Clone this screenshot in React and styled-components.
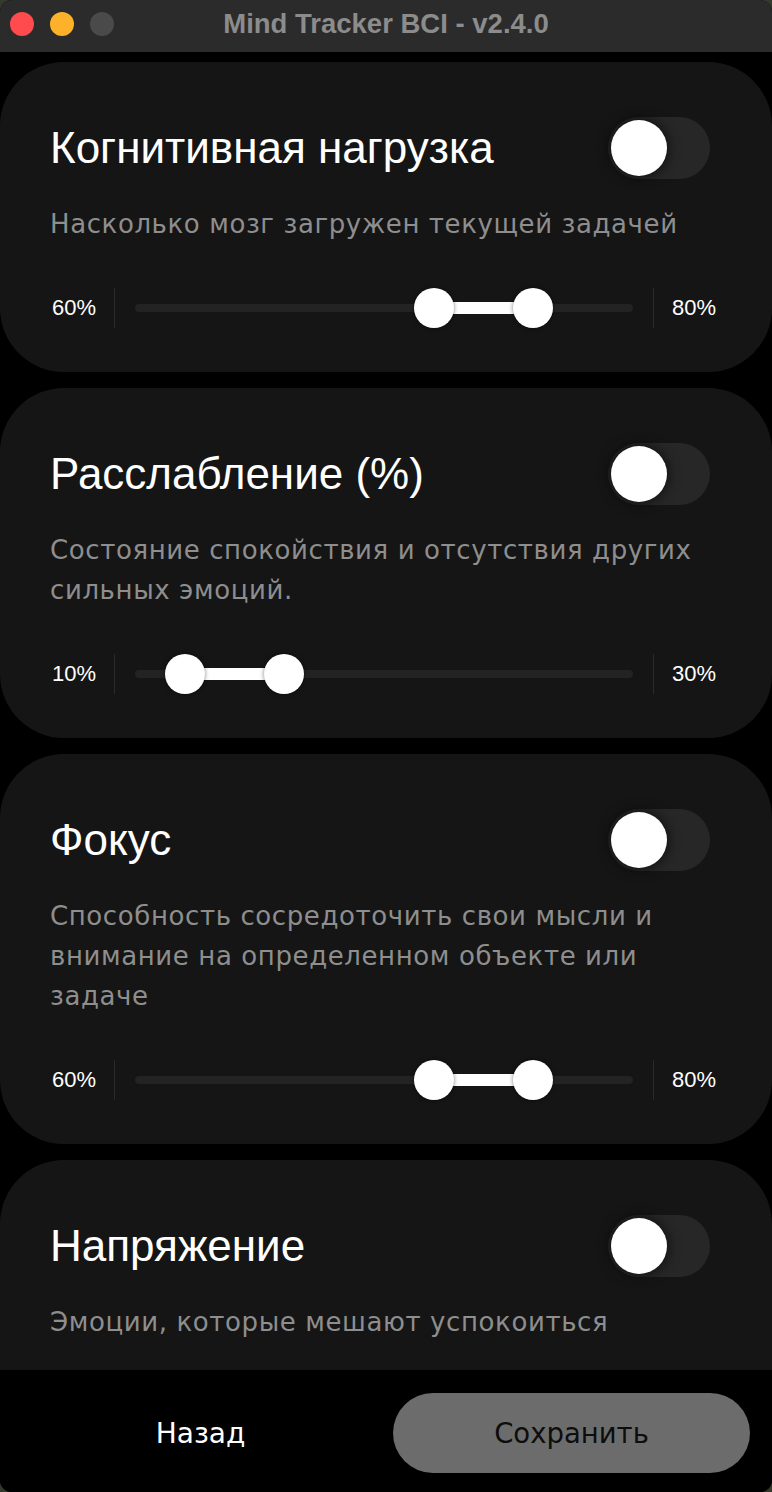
import React from "react";
import styled, { createGlobalStyle } from "styled-components";

const Global = createGlobalStyle`
  html, body {
    margin: 0;
    padding: 0;
    background: #34392c;
  }
  * { box-sizing: border-box; }
`;

const Window = styled.div`
  width: 772px;
  height: 1492px;
  display: flex;
  flex-direction: column;
  background: #000;
  border-radius: 12px;
  overflow: hidden;
  font-family: "DejaVu Sans", "Liberation Sans", sans-serif;
`;

const TitleBar = styled.header`
  position: relative;
  height: 52px;
  flex: none;
  display: flex;
  align-items: center;
  justify-content: center;
  padding-bottom: 5px;
  background: #2b2b2b;
`;

const Lights = styled.div`
  position: absolute;
  left: 10px;
  top: 12px;
  display: flex;
  gap: 16px;
`;

const Light = styled.span`
  width: 24px;
  height: 24px;
  border-radius: 50%;
  background: ${(p) => p.$color};
`;

const WindowTitle = styled.h1`
  margin: 0;
  font-family: "Liberation Sans", Arial, sans-serif;
  font-weight: 700;
  font-size: 27.5px;
  color: #8c8c8c;
`;

const Scroller = styled.main`
  flex: 1;
  overflow: hidden;
  display: flex;
  flex-direction: column;
  gap: 16px;
  padding-top: 10px;
`;

const Card = styled.section`
  flex: none;
  background: #151515;
  border-radius: 64px;
  padding: 55px 54px 44px 50px;
  display: flex;
  flex-direction: column;
`;

const Header = styled.div`
  height: 62px;
  display: flex;
  align-items: center;
  justify-content: space-between;
`;

const Title = styled.h2`
  margin: 0;
  font-family: "Liberation Sans", Arial, sans-serif;
  font-weight: 400;
  font-size: 44px;
  color: #fff;
`;

const Toggle = styled.div`
  width: 102px;
  height: 62px;
  margin-right: 8px;
  border-radius: 31px;
  background: #272727;
  padding: 3px;
  display: flex;
  justify-content: ${(p) => (p.$on ? "flex-end" : "flex-start")};
`;

const Knob = styled.span`
  width: 56px;
  height: 56px;
  border-radius: 50%;
  background: #fff;
  box-shadow: 0 0 12px 2px rgba(0, 0, 0, 0.55);
`;

const Description = styled.p`
  margin: 25px 0 0;
  max-width: 660px;
  font-size: 26px;
  line-height: 40px;
  letter-spacing: 0.6px;
  color: #8e8e8e;
`;

const SliderRow = styled.div`
  margin-top: 44px;
  height: 40px;
  display: flex;
  align-items: center;
`;

const Value = styled.span`
  width: 46px;
  flex: none;
  font-family: "Liberation Sans", Arial, sans-serif;
  font-size: 22px;
  color: #fff;
  text-align: ${(p) => (p.$end ? "right" : "left")};
`;

const Divider = styled.span`
  width: 1px;
  height: 40px;
  flex: none;
  background: #2a2a2a;
  margin: ${(p) => (p.$flip ? "0 18px 0 20px" : "0 20px 0 18px")};
`;

const Track = styled.div`
  position: relative;
  flex: 1;
  height: 40px;
  display: flex;
  align-items: center;
`;

const Rail = styled.div`
  width: 100%;
  height: 8px;
  border-radius: 4px;
  background: #232323;
`;

const Fill = styled.div`
  position: absolute;
  top: 14px;
  height: 12px;
  background: #fff;
`;

const Thumb = styled.span`
  position: absolute;
  top: 0;
  width: 40px;
  height: 40px;
  margin-left: -20px;
  border-radius: 50%;
  background: #fff;
  box-shadow: 0 0 4px rgba(0, 0, 0, 0.5);
`;

const Footer = styled.footer`
  height: 122px;
  flex: none;
  background: #000;
  display: grid;
  grid-template-columns: 1fr 1fr;
  gap: 14px;
  align-items: center;
  padding: 4px 22px 0;
`;

const TextButton = styled.button`
  border: 0;
  background: none;
  height: 80px;
  font-family: "DejaVu Sans", sans-serif;
  font-size: 28px;
  color: #fff;
`;

const PrimaryButton = styled.button`
  border: 0;
  height: 80px;
  border-radius: 40px;
  background: #6c6c6c;
  font-family: "DejaVu Sans", sans-serif;
  font-size: 27.5px;
  color: #0d0d0d;
`;

const metrics = [
  {
    title: "Когнитивная нагрузка",
    desc: "Насколько мозг загружен текущей задачей",
    min: 60,
    max: 80,
  },
  {
    title: "Расслабление (%)",
    desc: "Состояние спокойствия и отсутствия других сильных эмоций.",
    min: 10,
    max: 30,
  },
  {
    title: "Фокус",
    desc: "Способность сосредоточить свои мысли и внимание на определенном объекте или задаче",
    min: 60,
    max: 80,
  },
  {
    title: "Напряжение",
    desc: "Эмоции, которые мешают успокоиться",
    min: 20,
    max: 40,
  },
];

function RangeSlider({ min, max }) {
  return (
    <SliderRow>
      <Value $end>{min}%</Value>
      <Divider />
      <Track>
        <Rail />
        <Fill style={{ left: `${min}%`, width: `${max - min}%` }} />
        <Thumb style={{ left: `${min}%` }} />
        <Thumb style={{ left: `${max}%` }} />
      </Track>
      <Divider $flip />
      <Value>{max}%</Value>
    </SliderRow>
  );
}

function MetricCard({ title, desc, min, max }) {
  return (
    <Card>
      <Header>
        <Title>{title}</Title>
        <Toggle>
          <Knob />
        </Toggle>
      </Header>
      <Description>{desc}</Description>
      <RangeSlider min={min} max={max} />
    </Card>
  );
}

export default function App() {
  return (
    <>
      <Global />
      <Window>
        <TitleBar>
          <Lights>
            <Light $color="#ff4b4e" />
            <Light $color="#fdb22a" />
            <Light $color="#4a4a4a" />
          </Lights>
          <WindowTitle>Mind Tracker BCI - v2.4.0</WindowTitle>
        </TitleBar>
        <Scroller>
          {metrics.map((m) => (
            <MetricCard key={m.title} {...m} />
          ))}
        </Scroller>
        <Footer>
          <TextButton>Назад</TextButton>
          <PrimaryButton>Сохранить</PrimaryButton>
        </Footer>
      </Window>
    </>
  );
}
